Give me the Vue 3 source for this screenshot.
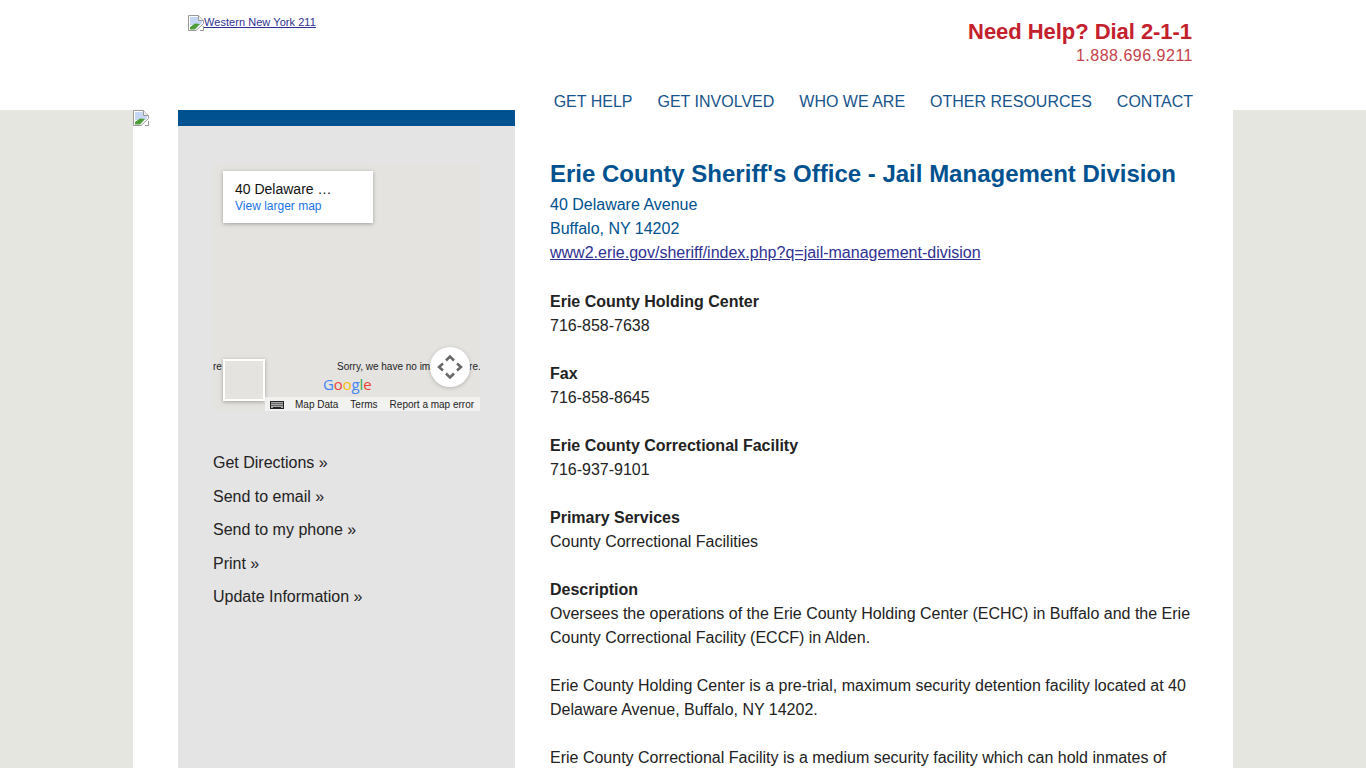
<template>
  <div class="page">
    <header class="top">
      <div class="top-in">
        <a class="logo" href="#"><svg class="broken" viewBox="0 0 16 16"><path d="M.5.500h10l5 5v3L8 15.500H.5z" fill="#fff" stroke="#9a9a9a"/><path d="M2 2h8l4 4v2l-2 2H2z" fill="#c6d6f5"/><path d="M2 14.500V12l5-3.500 5 .5-5 5.500z" fill="#4f9d3a"/><path d="M10.500.500v5h5" fill="#f0f0f0" stroke="#9a9a9a"/><path d="M15.500 11v4.500H12" fill="none" stroke="#9a9a9a"/></svg><span class="logo-text">Western New York 211</span></a>
        <div class="top-right">
          <div class="help">
            <div class="dial">Need Help? Dial 2-1-1</div>
            <div class="phone">1.888.696.9211</div>
          </div>
          <nav class="nav">
            <a v-for="n in navItems" :key="n" href="#">{{ n }}</a>
          </nav>
        </div>
      </div>
    </header>

    <div class="wrap">
      <div class="gutter"><svg class="broken" viewBox="0 0 16 16"><path d="M.5.500h10l5 5v3L8 15.500H.5z" fill="#fff" stroke="#9a9a9a"/><path d="M2 2h8l4 4v2l-2 2H2z" fill="#c6d6f5"/><path d="M2 14.500V12l5-3.500 5 .5-5 5.500z" fill="#4f9d3a"/><path d="M10.500.500v5h5" fill="#f0f0f0" stroke="#9a9a9a"/><path d="M15.500 11v4.500H12" fill="none" stroke="#9a9a9a"/></svg></div>

      <aside class="side">
        <div class="map">
          <div class="map-card">
            <div class="map-title">40 Delaware …</div>
            <a class="map-link" href="#">View larger map</a>
          </div>
          <div class="sorry">Sorry, we have no imagery here.</div>
          <div class="sorry-left">re</div>
          <div class="thumb"></div>
          <div class="pan">
            <svg viewBox="0 0 40 40" width="40" height="40"><path d="M16 13.500l4-4 4 4M16 26.500l4 4 4-4M13 16.500 9 20l4 3.500M27 16.500l4 3.500-4 3.500" fill="none" stroke="#666" stroke-width="2.500"/></svg>
          </div>
          <div class="google"><span class="g-b">G</span><span class="g-r">o</span><span class="g-y">o</span><span class="g-b">g</span><span class="g-g">l</span><span class="g-r">e</span></div>
          <div class="map-foot">
            <svg class="kbd" viewBox="0 0 14 8" width="14" height="8"><rect x=".5" y=".5" width="13" height="7" fill="#aaa" stroke="#222"/><path d="M1.500 2.500h11M1.500 4.500h11" stroke="#222" stroke-dasharray="1 1"/><path d="M3 6.500h8" stroke="#222"/></svg>
            <span class="f1">Map Data</span>
            <span class="f2">Terms</span>
            <span class="f3">Report a map error</span>
          </div>
        </div>
        <ul class="actions">
          <li v-for="a in actions" :key="a">{{ a }} »</li>
        </ul>
      </aside>

      <main class="main">
        <h1>Erie County Sheriff's Office - Jail Management Division</h1>
        <div class="addr">40 Delaware Avenue<br>Buffalo, NY 14202</div>
        <a class="site" href="#">www2.erie.gov/sheriff/index.php?q=jail-management-division</a>
        <p class="first"><b>Erie County Holding Center</b><br>716-858-7638</p>
        <p><b>Fax</b><br>716-858-8645</p>
        <p><b>Erie County Correctional Facility</b><br>716-937-9101</p>
        <p><b>Primary Services</b><br>County Correctional Facilities</p>
        <p><b>Description</b><br>Oversees the operations of the Erie County Holding Center (ECHC) in Buffalo and the Erie County Correctional Facility (ECCF) in Alden.</p>
        <p>Erie County Holding Center is a pre-trial, maximum security detention facility located at 40 Delaware Avenue, Buffalo, NY 14202.</p>
        <p>Erie County Correctional Facility is a medium security facility which can hold inmates of</p>
      </main>
    </div>
  </div>
</template>

<script setup>
const navItems = ['GET HELP', 'GET INVOLVED', 'WHO WE ARE', 'OTHER RESOURCES', 'CONTACT']
const actions = ['Get Directions', 'Send to email', 'Send to my phone', 'Print', 'Update Information']
</script>

<style>
html, body { overflow: hidden; }
</style>

<style scoped>
.page {
  height: 768px;
  overflow: hidden;
  background: #e5e6e0;
  font-family: "Liberation Sans", Arial, sans-serif;
  font-size: 16px;
  line-height: 24px;
  color: #222;
}
.top { height: 110px; background: #fff; }
.top-in {
  width: 1005px;
  margin-left: 188px;
  display: flex;
  justify-content: space-between;
}
.logo {
  display: flex;
  align-items: flex-start;
  height: 16px;
  margin-top: 15px;
  font-size: 11px;
  line-height: 15px;
  letter-spacing: .05px;
  color: #2e3192;
}
.broken { width: 16px; height: 16px; display: block; flex: none; }
.top-right { display: flex; flex-direction: column; align-items: flex-end; }
.help { text-align: right; padding: 19px 1px 0 0; color: #c4202c; }
.dial { font-size: 22px; line-height: 26px; font-weight: bold; letter-spacing: -.05px; }
.phone { font-size: 16px; line-height: 22px; margin-right: -1px; color: #c4424a; letter-spacing: .5px; }
.nav { display: flex; gap: 25px; margin-top: 23px; font-size: 16px; line-height: 24px; }
.nav a { color: #17548c; text-decoration: none; }

.wrap {
  width: 1100px;
  height: 658px;
  margin-left: 133px;
  background: #fff;
  display: flex;
}
.gutter { width: 45px; flex: none; }
.side {
  width: 337px;
  flex: none;
  background: #e4e4e4;
  border-top: 16px solid #00518f;
  padding: 37px 35px 0;
  box-sizing: border-box;
}
.map {
  position: relative;
  width: 267px;
  height: 248px;
  background: #e5e3df;
  overflow: hidden;
  font-size: 10px;
  line-height: 14px;
  color: #222;
}
.map-card {
  position: absolute;
  left: 10px;
  top: 8px;
  width: 150px;
  height: 52px;
  box-sizing: border-box;
  padding: 10px 12px;
  background: #fff;
  box-shadow: 0 1px 4px rgba(0, 0, 0, .3);
}
.map-title { font-size: 14px; line-height: 16px; color: #111; }
.map-link { display: block; margin-top: 1px; font-size: 12px; line-height: 16px; color: #1a73e8; text-decoration: none; }
.sorry { position: absolute; left: 124px; top: 197px; white-space: nowrap; }
.sorry-left { position: absolute; left: 0; top: 197px; }
.thumb {
  position: absolute;
  left: 10px;
  top: 196px;
  width: 38px;
  height: 38px;
  background: #e5e3df;
  border: 2px solid #fff;
  box-shadow: 0 1px 4px rgba(0, 0, 0, .3);
}
.pan {
  position: absolute;
  left: 217px;
  top: 184px;
  width: 40px;
  height: 40px;
  border-radius: 50%;
  background: #fff;
  box-shadow: 0 1px 4px rgba(0, 0, 0, .2);
}
.google {
  position: absolute;
  left: 110px;
  top: 212px;
  font-size: 15px;
  line-height: 18px;
  font-family: "Open Sans", sans-serif;
  letter-spacing: -.15px;
}
.g-b { color: #4285f4; }
.g-r { color: #ea4335; }
.g-y { color: #fbbc05; }
.g-g { color: #34a853; }
.map-foot {
  position: absolute;
  right: 0;
  bottom: 0;
  height: 14px;
  width: 215px;
  padding-top: 1px;
  box-sizing: border-box;
  background: rgba(245, 245, 245, .8);
  display: flex;
  align-items: center;
  white-space: nowrap;
}
.kbd { margin: 0 12px 0 5px; flex: none; }
.f1 { margin-right: 12px; margin-left: -1px; }
.f2 { margin-right: 12px; }

.actions { list-style: none; margin: 35px 0 0; padding: 0; }
.actions li { height: 33.500px; line-height: 33.500px; }

.main { width: 645px; margin-left: 35px; padding-top: 48px; }
h1 {
  margin: 0 0 3px;
  font-size: 24px;
  line-height: 32px;
  color: #00518f;
}
.addr { color: #00518f; }
.site { color: #2e3192; }
p { margin: 24px 0; }
p.first { margin-top: 25px; }
</style>
